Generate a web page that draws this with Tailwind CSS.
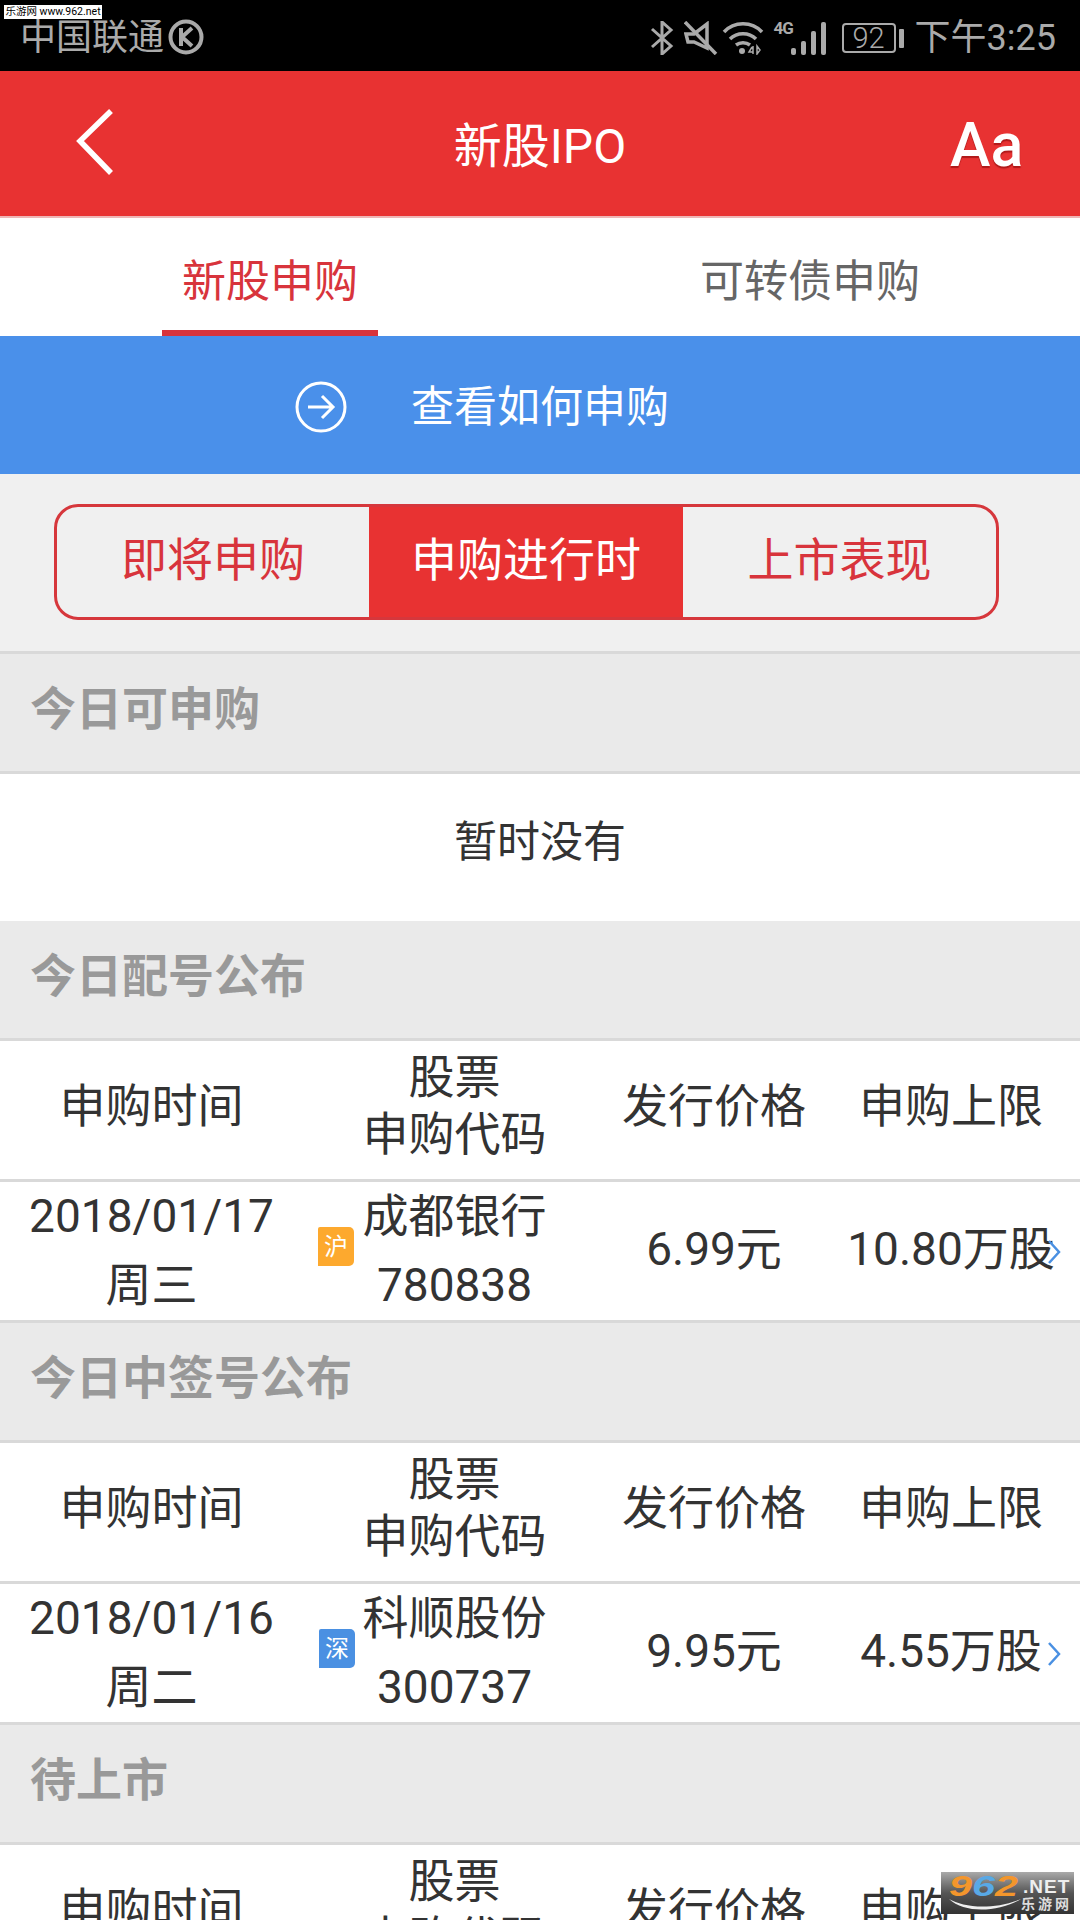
<!DOCTYPE html>
<html lang="zh-CN">
<head>
    <meta charset="UTF-8">
    <meta name="viewport" content="width=device-width, initial-scale=1.0">
    <title>新股IPO</title>
    <script src="https://cdn.jsdelivr.net/npm/@tailwindcss/browser@4"></script>
</head>
<body class="bg-white">
<div class="relative h-[1920px] w-[1080px] overflow-hidden bg-white text-[46px] text-[#333] [font-family:Roboto,'Noto_Sans_CJK_SC',sans-serif]">

    <!-- Watermarks -->
    <div class="absolute left-[4px] top-[5px] z-10 flex h-[14px] w-[98px] items-center justify-center whitespace-nowrap bg-white text-[10.5px] leading-none text-black">乐游网 www.962.net</div>
    <div class="absolute left-[941px] top-[1872px] z-10 h-[42px] w-[133px] overflow-hidden bg-gradient-to-b from-[#aaa] via-[#555] to-[#333] leading-none">
        <span class="absolute left-[8px] top-[-1px] origin-left scale-x-[1.38] text-[30px] font-bold italic [font-family:'Liberation_Sans',sans-serif]"><span class="text-[#f3962c]">9</span><span class="text-[#58a9e6]">6</span><span class="text-[#f3962c]">2</span></span>
        <span class="absolute left-[82px] top-[5px] text-[19px] font-bold tracking-[1px] text-[#eee] [font-family:'Liberation_Sans',sans-serif]">.NET</span>
        <span class="absolute left-[80px] top-[25px] whitespace-nowrap text-[14px] font-bold tracking-[3px] text-[#ddd]">乐游网</span>
        <svg class="absolute left-[8px] top-[26px]" width="72" height="14" viewBox="0 0 72 14" fill="#eee"><path d="M0 1c14 8 42 12 72 0C50 14 16 16 0 1z"/></svg>
    </div>

    <!-- Status bar -->
    <div class="flex h-[71px] items-center justify-between bg-black pl-[20px] pr-[24px] pt-[5px] text-[36px] text-[#aaa]">
        <div class="flex items-center gap-[4px]">
            <span>中国联通</span>
            <svg class="mt-[-2px]" width="36" height="36" viewBox="0 0 36 36" fill="none" stroke="#aaa"><circle cx="18" cy="18" r="15.5" stroke-width="4"/><path d="M13 9v18M24 9l-10 9 10 9" stroke-width="4"/></svg>
        </div>
        <div class="flex items-center">
            <svg width="24" height="34" viewBox="0 0 24 34" fill="none" stroke="#aaa" stroke-width="3"><path d="M2 8l19 17-9 8V1l9 8-19 17"/></svg>
            <svg class="ml-[10px]" width="34" height="34" viewBox="0 0 34 34" fill="none" stroke="#aaa"><path d="M2 13h8l13-10v24L10 21H4z" stroke-width="3.5"/><path d="M1 1l31 32" stroke-width="3.5"/></svg>
            <svg class="ml-[4px]" width="42" height="34" viewBox="0 0 42 34" fill="none" stroke="#aaa" stroke-width="3.5"><path d="M2 11c10-11 28-11 38 0M8 18c7-7 19-7 26 0M14 24c4-3 10-3 14 0"/><circle cx="20" cy="30" r="3" fill="#aaa" stroke="none"/><path d="M30 26l-3 5h4M31 25v8M35 25v8l3-4z" stroke-width="1.5"/></svg>
            <div class="relative ml-[8px] h-[34px] w-[54px]">
                <span class="absolute left-[2px] top-0 text-[17px] font-bold leading-[14px] tracking-[-1px]">4G</span>
                <div class="absolute bottom-0 right-0 flex items-end gap-[5px]">
                    <div class="h-[7px] w-[5px] rounded-[2px] bg-[#aaa]"></div>
                    <div class="h-[14px] w-[5px] rounded-[2px] bg-[#aaa]"></div>
                    <div class="h-[24px] w-[5px] rounded-[2px] bg-[#aaa]"></div>
                    <div class="h-[33px] w-[5px] rounded-[2px] bg-[#aaa]"></div>
                </div>
            </div>
            <div class="ml-[16px] flex h-[30px] w-[54px] items-center justify-center rounded-[4px] border-2 border-[#aaa] text-[29px] font-light leading-none">92</div>
            <div class="ml-[3px] h-[19px] w-[5px] rounded-[1px] bg-[#aaa]"></div>
            <span class="ml-[11px]">下午3:25</span>
        </div>
    </div>

    <!-- Title bar -->
    <div class="relative flex h-[147px] items-center justify-center border-b-2 border-[#eeb6b6] bg-[#e83232] pt-[6px] text-[48px] text-white">
        <svg class="absolute left-[74px] top-[37px]" width="42" height="68" viewBox="0 0 42 68" fill="none" stroke="#fff" stroke-width="5.5"><path d="M37 3L6 33l31 32"/></svg>
        <span>新股IPO</span>
        <span class="absolute left-[950px] top-[33px] text-[61px] font-medium leading-[82px] [text-shadow:0_2px_1px_rgba(120,0,0,0.5)]">Aa</span>
    </div>

    <!-- Tabs -->
    <div class="grid h-[118px] grid-cols-[540px_540px] bg-white text-[44px]">
        <div class="flex justify-center">
            <div class="flex w-[216px] items-center justify-center border-b-[6px] border-[#d8343c] pt-[15px] text-[#d8343c]">新股申购</div>
        </div>
        <div class="flex items-center justify-center pt-[9px] text-[#666]">可转债申购</div>
    </div>

    <!-- How to subscribe -->
    <div class="flex h-[138px] items-center justify-center bg-[#4a90ea] pt-[4px] text-[43px] text-white">
        <svg class="mr-[63px]" width="54" height="54" viewBox="0 0 54 54" fill="none" stroke="#fff" stroke-width="3"><circle cx="27" cy="27" r="24"/><path d="M14 27h25M28 16l11 11-11 11"/></svg>
        <span>查看如何申购</span>
        <div class="w-[117px]"></div>
    </div>

    <!-- Segmented control -->
    <div class="h-[177px] bg-[#f0f0f0] pl-[54px] pt-[30px]">
        <div class="grid h-[116px] w-[945px] grid-cols-[312px_314px_313px] overflow-hidden rounded-[24px] border-[3px] border-[#d6373c] text-[#d8343c]">
            <div class="flex items-center justify-center pb-[4px]">即将申购</div>
            <div class="flex items-center justify-center bg-[#e83232] pb-[4px] text-white">申购进行时</div>
            <div class="flex items-center justify-center pb-[4px]">上市表现</div>
        </div>
    </div>

    <!-- 今日可申购 -->
    <div class="flex h-[123px] items-center border-y-[3px] border-[#d9d9d9] bg-[#eaeaea] pb-[6px] pl-[30px] text-[46px] font-bold text-[#999]">今日可申购</div>
    <div class="flex h-[147px] items-center justify-center pb-[10px] text-[43px] text-[#333]">暂时没有</div>

    <!-- 今日配号公布 -->
    <div class="flex h-[120px] items-center border-b-[3px] border-[#d9d9d9] bg-[#eaeaea] pb-[6px] pl-[30px] text-[46px] font-bold text-[#999]">今日配号公布</div>
    <div class="grid h-[141px] grid-cols-[303px_303px_216px_258px] items-center border-b-[3px] border-[#d9d9d9] text-center">
        <div class="pb-[8px]">申购时间</div>
        <div class="pb-[8px] leading-[57px]">股票<br>申购代码</div>
        <div class="pb-[8px]">发行价格</div>
        <div class="pb-[8px]">申购上限</div>
    </div>
    <div class="relative grid h-[138px] grid-cols-[303px_303px_216px_258px] items-center text-center">
        <div class="pb-[16px] leading-[69px]">2018/01/17<br>周三</div>
        <div class="pb-[16px] leading-[69px]">成都银行<br>780838</div>
        <div class="pb-[20px]">6.99元</div>
        <div class="whitespace-nowrap pb-[20px]">10.80万股</div>
        <div class="absolute left-[318px] top-[45px] flex h-[39px] w-[36px] items-center justify-center rounded-r-[5px] rounded-tl-[2px] bg-[#fda92e] text-[24px] text-white">沪</div>
        <svg class="absolute left-[1047px] top-[58px]" width="15" height="24" viewBox="0 0 15 24" fill="none" stroke="#4a90e2" stroke-width="2.5"><path d="M2 1l10 11L2 23"/></svg>
    </div>

    <!-- 今日中签号公布 -->
    <div class="flex h-[123px] items-center border-y-[3px] border-[#d9d9d9] bg-[#eaeaea] pb-[6px] pl-[30px] text-[46px] font-bold text-[#999]">今日中签号公布</div>
    <div class="grid h-[141px] grid-cols-[303px_303px_216px_258px] items-center border-b-[3px] border-[#d9d9d9] text-center">
        <div class="pb-[8px]">申购时间</div>
        <div class="pb-[8px] leading-[57px]">股票<br>申购代码</div>
        <div class="pb-[8px]">发行价格</div>
        <div class="pb-[8px]">申购上限</div>
    </div>
    <div class="relative grid h-[138px] grid-cols-[303px_303px_216px_258px] items-center text-center">
        <div class="pb-[16px] leading-[69px]">2018/01/16<br>周二</div>
        <div class="pb-[16px] leading-[69px]">科顺股份<br>300737</div>
        <div class="pb-[20px]">9.95元</div>
        <div class="whitespace-nowrap pb-[20px]">4.55万股</div>
        <div class="absolute left-[319px] top-[45px] flex h-[39px] w-[36px] items-center justify-center rounded-r-[5px] rounded-tl-[2px] bg-[#4a90e2] text-[24px] text-white">深</div>
        <svg class="absolute left-[1047px] top-[58px]" width="15" height="24" viewBox="0 0 15 24" fill="none" stroke="#4a90e2" stroke-width="2.5"><path d="M2 1l10 11L2 23"/></svg>
    </div>

    <!-- 待上市 -->
    <div class="flex h-[123px] items-center border-y-[3px] border-[#d9d9d9] bg-[#eaeaea] pb-[6px] pl-[30px] text-[46px] font-bold text-[#999]">待上市</div>
    <div class="grid h-[141px] grid-cols-[303px_303px_216px_258px] items-center border-b-[3px] border-[#d9d9d9] text-center">
        <div class="pb-[8px]">申购时间</div>
        <div class="pb-[8px] leading-[57px]">股票<br>申购代码</div>
        <div class="pb-[8px]">发行价格</div>
        <div class="pb-[8px]">申购上限</div>
    </div>
</div>
</body>
</html>
